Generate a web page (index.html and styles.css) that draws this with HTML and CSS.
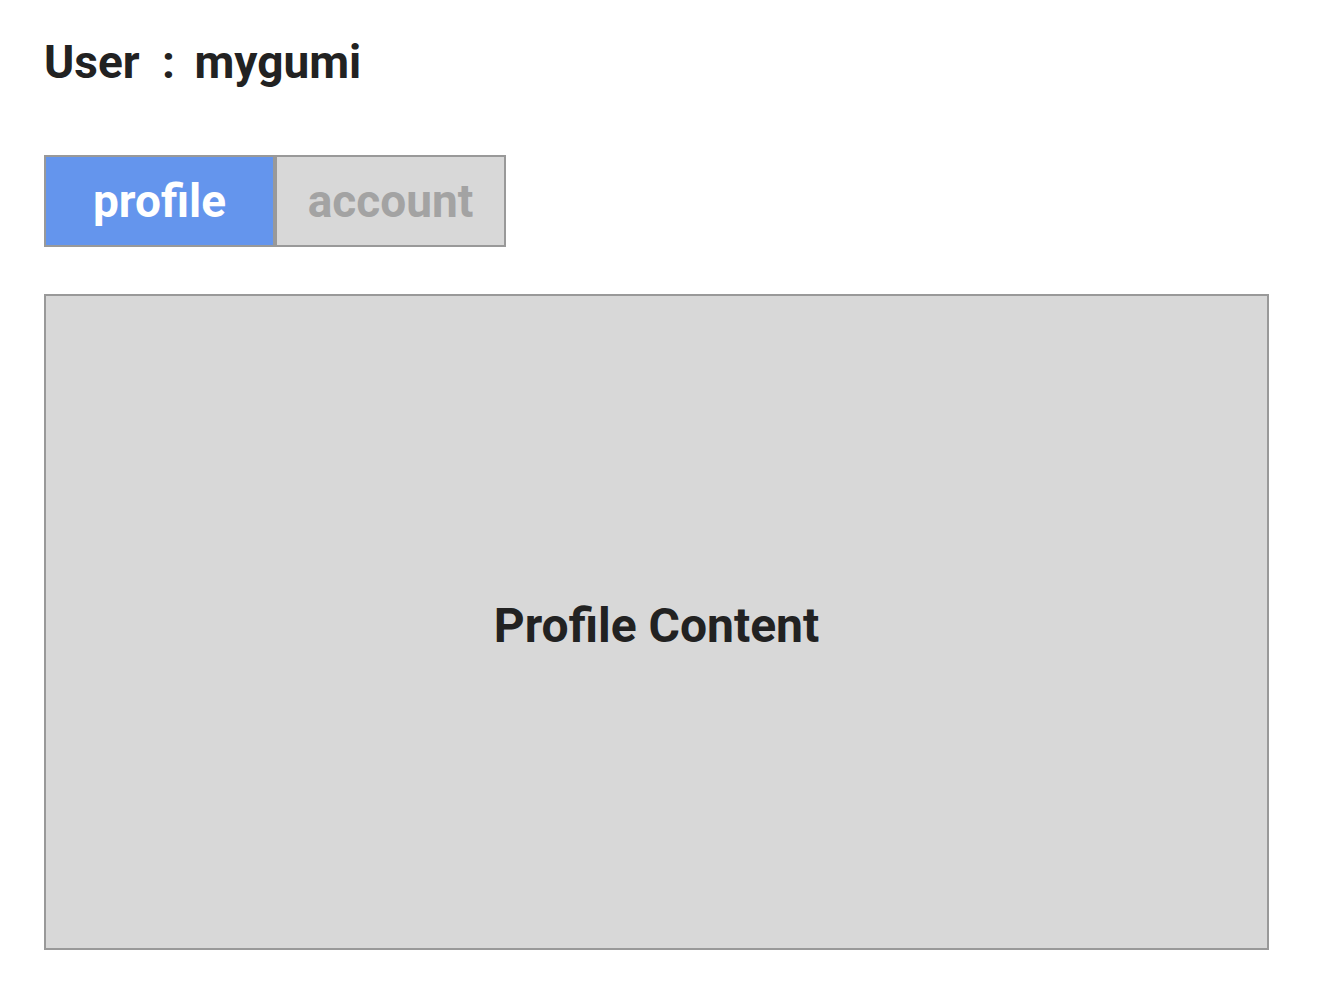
FILE: index.html
```html
<!DOCTYPE html>
<html>
<head>
<meta charset="utf-8">
<link rel="stylesheet" href="styles.css">
</head>
<body>
<div class="page">
  <h1 class="user">User <span class="sep">:</span> mygumi</h1>
  <div class="tabs">
    <div class="tab active">profile</div>
    <div class="tab">account</div>
  </div>
  <div class="content">Profile Content</div>
</div>
</body>
</html>
```
FILE: styles.css
```css
html, body {
  margin: 0;
  padding: 0;
  background: #fff;
}
.page {
  padding: 30px 54px 0 44px;
  font-family: Roboto, "Liberation Sans", sans-serif;
  font-weight: 700;
  color: #222;
}
.user {
  margin: 0;
  font-size: 46px;
  line-height: 64px;
  font-weight: 700;
}
.sep {
  margin: 0 8px 0 11px;
}
.tabs {
  display: flex;
  margin-top: 61px;
}
.tab {
  box-sizing: border-box;
  width: 231px;
  height: 92px;
  border: 2px solid #999;
  background: #d8d8d8;
  color: #a3a3a3;
  font-size: 46px;
  display: flex;
  align-items: center;
  justify-content: center;
}
.tab.active {
  background: #6495ed;
  color: #fff;
}
.content {
  box-sizing: border-box;
  margin-top: 47px;
  width: 1225px;
  height: 656px;
  padding-top: 6px;
  border: 2px solid #999;
  background: #d8d8d8;
  display: flex;
  align-items: center;
  justify-content: center;
  font-size: 48px;
  color: #222;
}
```
